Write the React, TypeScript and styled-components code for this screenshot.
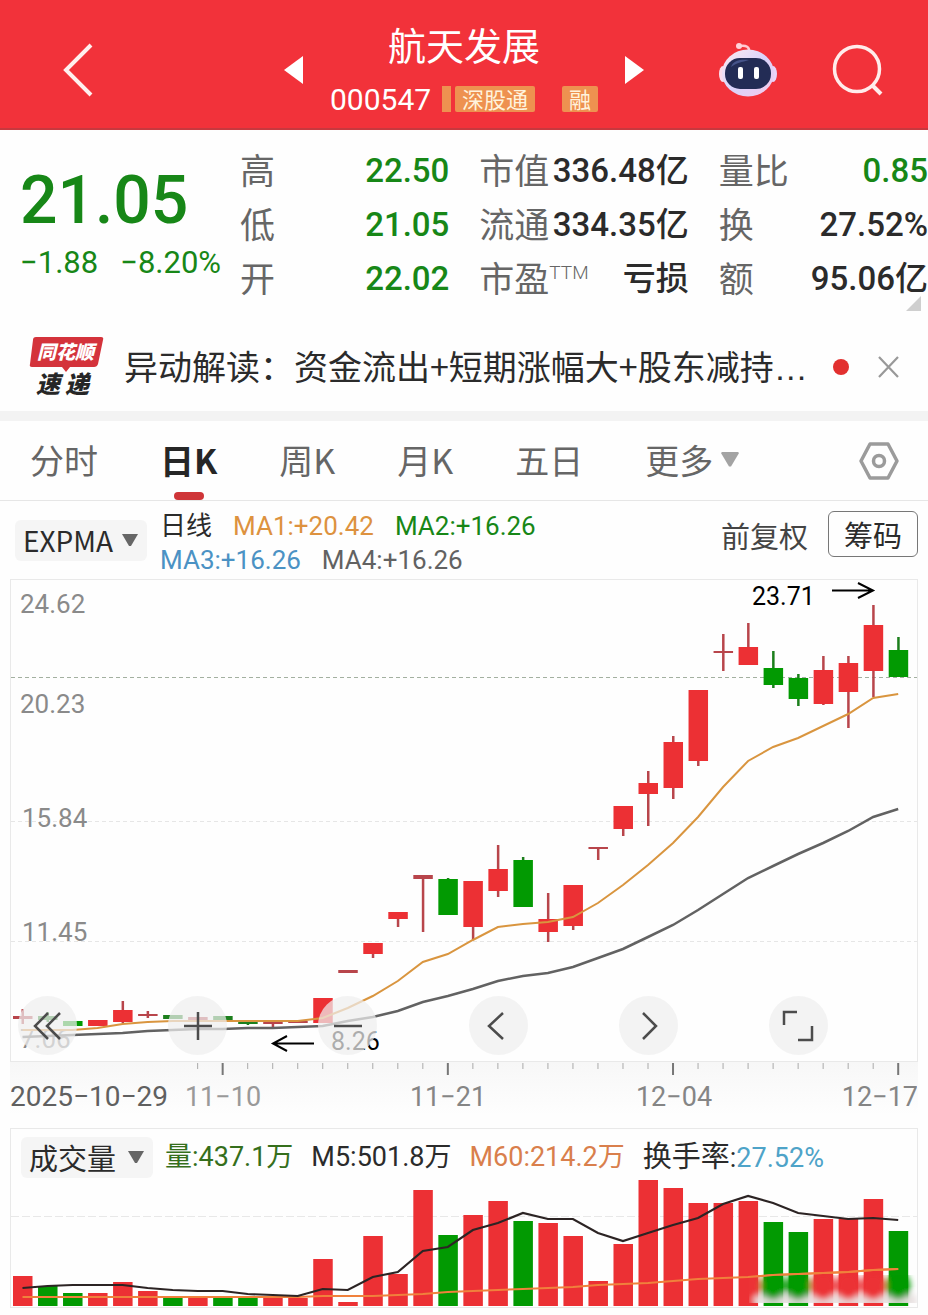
import React from 'react';
import styled, { createGlobalStyle } from 'styled-components';

const RED = '#ec3034';
const GREEN = '#029a02';
const TEXT_GREEN = '#178717';
const NUM = `Roboto, "Noto Sans CJK SC", sans-serif`;
const CJK = `"Noto Sans CJK SC", Roboto, sans-serif`;

const GlobalStyle = createGlobalStyle`
  * { box-sizing: border-box; }
  body { margin: 0; background: #fefefe; font-family: ${NUM}; color: #2b2b2b; }
  button, select { font: inherit; color: inherit; border: 0; background: none; padding: 0; margin: 0; cursor: pointer; }
  h1, p, dl, dd, dt { margin: 0; font-weight: 400; }
  svg { display: block; }
`;

/* ---------- header ---------- */

const Header = styled.header`
  display: grid;
  grid-template-columns: 1fr auto 1fr;
  align-items: center;
  height: 130px;
  padding: 12px 44px 0;
  background: #f2323a;
  border-bottom: 2px solid #c8383e;
`;
const HeaderCenter = styled.div`
  display: flex;
  align-items: center;
  gap: 27px;
`;
const HeaderActions = styled.div`
  display: flex;
  align-items: center;
  justify-content: flex-end;
  gap: 54px;
`;
const IconButton = styled.button`
  display: flex;
  align-items: center;
  justify-content: center;
`;
const BackButton = styled(IconButton)`
  justify-self: start;
  margin-left: 18px;
`;
const StockTitle = styled.div`
  display: flex;
  flex-direction: column;
  align-items: center;
  gap: 6px;
  width: 268px;
  color: #fff;
`;
const StockName = styled.h1`
  font-family: ${CJK};
  font-size: 38px;
  line-height: 52px;
`;
const StockMeta = styled.div`
  display: flex;
  align-items: center;
  width: 100%;
  height: 46px;
`;
const StockCode = styled.span`
  font-size: 30px;
  margin-right: 11px;
`;
const Tag = styled.span<{ $gap?: number }>`
  display: block;
  height: 26px;
  padding: 0 7px;
  margin-left: ${(p) => p.$gap ?? 4}px;
  border-radius: 2px;
  background: #ee9150;
  color: #fff3dc;
  font-family: ${CJK};
  font-size: 22px;
  line-height: 25px;
  white-space: nowrap;
`;
const TagSliver = styled.i`
  width: 9px;
  height: 26px;
  background: #ee9150;
`;

/* ---------- quote ---------- */

const Quote = styled.section`
  position: relative;
  display: grid;
  grid-template-columns: 210px repeat(3, 1fr);
  gap: 30px;
  padding: 14px 0 12px;
`;
const PriceBlock = styled.div`
  padding: 19px 0 0 20px;
  color: ${TEXT_GREEN};
  white-space: nowrap;
`;
const Price = styled.p`
  font-size: 66px;
  line-height: 76px;
  font-weight: 500;
`;
const Change = styled.p`
  display: flex;
  gap: 22px;
  font-size: 31px;
  line-height: 48px;
`;
const Stats = styled.dl`
  display: flex;
  flex-direction: column;
`;
const Stat = styled.div`
  display: flex;
  justify-content: space-between;
  height: 54px;
  line-height: 54px;
  white-space: nowrap;
`;
const StatLabel = styled.dt`
  font-family: ${CJK};
  font-size: 35px;
  line-height: 50px;
  color: #666;
`;
const Sup = styled.span`
  display: inline-block;
  font-family: Roboto, sans-serif;
  font-size: 19px;
  font-weight: 300;
  line-height: 20px;
  vertical-align: 13px;
`;
const StatValue = styled.dd<{ $green?: boolean }>`
  font-size: 33px;
  font-weight: 500;
  color: ${(p) => (p.$green ? TEXT_GREEN : '#2b2b2b')};
`;
const Corner = styled.svg`
  position: absolute;
  right: 7px;
  bottom: 7px;
`;

/* ---------- news ---------- */

const News = styled.section`
  display: flex;
  align-items: center;
  height: 93px;
  padding: 4px 28px 0;
`;
const NewsText = styled.a`
  flex: 1;
  margin-left: 19px;
  overflow: hidden;
  white-space: nowrap;
  color: #2b2b2b;
  font-family: ${CJK};
  font-size: 34px;
  line-height: 50px;
  text-decoration: none;
`;
const Ellipsis = styled.span`
  font-family: "Liberation Sans", sans-serif;
`;
const Dot = styled.i`
  width: 16px;
  height: 16px;
  margin-right: 28px;
  border-radius: 50%;
  background: #e2302f;
`;
const Divider = styled.div`
  height: 10px;
  background: #f3f3f3;
`;

/* ---------- tabs ---------- */

const Tabs = styled.nav`
  display: flex;
  align-items: center;
  gap: 62px;
  height: 80px;
  padding: 0 29px 0 30px;
  border-bottom: 1px solid #e6e6e6;
`;
const Tab = styled.button<{ $active?: boolean }>`
  position: relative;
  display: flex;
  align-items: center;
  gap: 8px;
  height: 79px;
  padding-bottom: 3px;
  font-family: ${CJK};
  font-size: 34px;
  font-weight: ${(p) => (p.$active ? 700 : 400)};
  color: ${(p) => (p.$active ? '#262626' : '#666')};
  &::after {
    content: '';
    display: ${(p) => (p.$active ? 'block' : 'none')};
    position: absolute;
    left: 50%;
    bottom: 0;
    width: 30px;
    height: 8px;
    margin-left: -15px;
    border-radius: 4px;
    background: #cf3538;
  }
`;
const Settings = styled(IconButton)`
  margin-left: auto;
`;

/* ---------- indicator bar ---------- */

const Indicator = styled.section`
  display: flex;
  align-items: center;
  height: 78px;
  padding: 0 10px 0 15px;
`;
const SelectBox = styled.label`
  position: relative;
  display: block;
  border-radius: 6px;
  background: #f5f5f5;
`;
const Select = styled.select<{ $size: number }>`
  display: block;
  appearance: none;
  width: 132px;
  height: 41px;
  padding: 0 0 0 8px;
  font-family: ${CJK};
  font-size: ${(p) => p.$size}px;
  line-height: 41px;
  color: #2b2b2b;
`;
const SelectArrow = styled.svg`
  position: absolute;
  right: 9px;
  top: 14px;
  pointer-events: none;
`;
const Averages = styled.div`
  margin-left: 13px;
  margin-bottom: -6px;
`;
const AverageRow = styled.div`
  display: flex;
  gap: 21px;
  font-size: 26px;
  line-height: 34px;
`;
const Tint = styled.span<{ $c: string }>`
  color: ${(p) => p.$c};
`;
const Adjust = styled.button`
  margin: 0 20px 10px auto;
  font-family: ${CJK};
  font-size: 29px;
  line-height: 44px;
  color: #444;
`;
const Chips = styled.button`
  width: 90px;
  height: 46px;
  margin-bottom: 12px;
  border: 1px solid #777;
  border-radius: 6px;
  font-family: ${CJK};
  font-size: 29px;
  line-height: 40px;
`;

/* ---------- charts ---------- */

const ChartArea = styled.main`
  padding: 0 10px 8px;
`;
const Panel = styled.section`
  position: relative;
  border: 1px solid #e9e9e9;
`;
const Plot = styled.svg`
  width: 100%;
  height: auto;
  font-family: ${NUM};
`;
const Controls = styled.div`
  position: absolute;
  left: 7px;
  right: 89px;
  bottom: 6px;
  display: flex;
  justify-content: space-between;
`;
const Round = styled(IconButton)`
  width: 59px;
  height: 59px;
  border-radius: 50%;
  background: rgba(238, 238, 238, 0.72);
`;
const Axis = styled.div`
  padding: 0 1px;
  background: linear-gradient(#f7f7f7, #fefefe 80%);
`;
const VolumeHead = styled.div`
  display: flex;
  align-items: center;
  height: 50px;
  padding: 6px 0 0 10px;
  font-size: 27px;
  line-height: 42px;
  white-space: nowrap;
`;
const Legend = styled.span<{ $c: string }>`
  margin-left: 18px;
  color: ${(p) => p.$c};
  &:first-of-type { margin-left: 12px; }
`;
const LegendLabel = styled.span`
  font-size: 29px;
`;

/* [body top, body bottom, high, low, colour] in plot units */
type Candle = [number, number, number, number, 'r' | 'g'];
const candles: Candle[] = [
  [437, 440, 430, 445, 'r'], [437, 441, 433, 443, 'g'], [442, 447, 442, 447, 'g'], [441, 447, 441, 447, 'r'],
  [431, 443, 422, 444, 'r'], [435, 437, 432, 439, 'r'], [436, 440, 436, 440, 'g'], [438, 441, 438, 441, 'r'],
  [437, 441, 437, 441, 'g'], [443, 445, 443, 446, 'g'], [442, 445, 442, 448, 'r'], [442, 444, 442, 444, 'r'],
  [419, 444, 419, 444, 'r'], [391, 394, 391, 394, 'r'], [364, 375, 364, 379, 'r'], [333, 340, 333, 348, 'r'],
  [296, 300, 296, 353, 'r'], [300, 336, 299, 336, 'g'], [302, 348, 302, 361, 'r'], [290, 312, 266, 318, 'r'],
  [281, 328, 278, 328, 'g'], [340, 353, 314, 363, 'r'], [306, 347, 306, 351, 'r'], [268, 270, 268, 281, 'r'],
  [227, 250, 227, 257, 'r'], [204, 215, 192, 247, 'r'], [163, 209, 157, 220, 'r'], [111, 182, 111, 187, 'r'],
  [72, 74, 55, 92, 'r'], [68, 86, 44, 86, 'r'], [89, 106, 72, 109, 'g'], [99, 120, 95, 127, 'g'],
  [91, 125, 77, 126, 'r'], [84, 113, 77, 149, 'r'], [46, 92, 26, 118, 'r'], [71, 98, 58, 98, 'g'],
];
const fast = [451, 451, 451, 449, 445, 443, 442, 442, 442, 442, 442, 442, 439, 429, 417, 402, 383, 375, 361, 348,
  345, 343, 338, 324, 306, 286, 264, 238, 208, 182, 168, 159, 147, 135, 119, 115];
const slow = [458, 457, 456, 455, 454, 452, 451, 450, 450, 449, 449, 448, 447, 442, 438, 432, 423, 417, 410, 402,
  397, 394, 388, 379, 370, 358, 346, 331, 315, 299, 287, 275, 264, 252, 238, 230];

/* bar heights in plot units, measured up from the base line */
const volumes = [30, 20, 13, 13, 24, 15, 9, 10, 9, 9, 9, 8, 47, 4, 70, 32, 116, 71, 91, 105,
  85, 83, 70, 25, 62, 126, 118, 103, 103, 105, 84, 74, 87, 87, 107, 75];
const volGreen = [1, 2, 6, 8, 9, 17, 20, 30, 31, 35];
const m5 = [18, 20, 21, 21, 21, 18, 16, 15, 15, 12, 11, 10, 17, 16, 29, 34, 55, 59, 76, 83,
  93, 87, 87, 73, 65, 73, 81, 88, 102, 110, 103, 93, 90, 87, 88, 86];
const m60 = [9, 9, 9, 9, 9, 9, 9, 9, 9, 9, 9, 9, 10, 10, 10, 11, 12, 14, 15, 16,
  17, 18, 19, 21, 22, 23, 25, 27, 28, 29, 31, 32, 33, 34, 36, 37];

const cx = (i: number) => 11.5 + 25.02 * i;
const BASE = 127;
const line = (ys: number[], flip = false) =>
  ys.map((y, i) => `${cx(i)},${flip ? BASE - y : y}`).join(' ');

const wickColor = { r: '#b8454b', g: '#1c7f1c' };

const PriceChart = () => (
  <Plot viewBox="0 1 906 481" role="img" aria-label="日K">
    <g stroke="#e6e6e6" strokeDasharray="4 3">
      <path d="M0 242.5H906M0 362.5H906" />
      <path d="M0 98.5H906" stroke="#a3b0a0" />
    </g>
    <g fill="#8a8a8a" fontSize="26">
      <text x="9" y="34">24.62</text>
      <text x="9" y="134">20.23</text>
      <text x="11" y="248">15.84</text>
      <text x="11" y="362">11.45</text>
      <text x="9" y="469">7.06</text>
    </g>
    {candles.map(([t, b, h, l, c], i) => (
      <g key={i}>
        <rect x={cx(i) - 1} y={h} width={2.5} height={l - h} fill={wickColor[c]} />
        <rect x={cx(i) - 9.5} y={t} width={19.5} height={b - t} fill={b - t < 5 ? wickColor[c] : c === 'r' ? RED : GREEN} />
      </g>
    ))}
    <polyline points={line(slow)} fill="none" stroke="#626262" strokeWidth="2.5" />
    <polyline points={line(fast)} fill="none" stroke="#d9953f" strokeWidth="2" />
    <g fill="#000" fontSize="25">
      <text x="741" y="26">23.71</text>
      <text x="320" y="471">8.26</text>
    </g>
    <g stroke="#000" strokeWidth="2" fill="none">
      <path d="M821 11.5H862M847 4L862 11.5L847 19" />
      <path d="M303 464.500H262M276 457L262 464.500L276 472" />
    </g>
  </Plot>
);

const major = [8, 17, 26, 35];
const AxisChart = () => (
  <Plot viewBox="0 0 906 66">
    {Array.from({ length: 29 }, (_, k) => k + 7).map((i) => (
      <rect key={i} x={cx(i) - (major.includes(i) ? 1 : 0.5)} y="1" width={major.includes(i) ? 2 : 1}
        height={major.includes(i) ? 12 : 6} fill={major.includes(i) ? '#777' : '#aaa'} />
    ))}
    <g fontSize="27" fill="#858585">
      <text x="-1" y="44" fontSize="28" fill="#606060">2025−10−29</text>
      <text x="212" y="44" textAnchor="middle" fill="#999">11−10</text>
      <text x="437" y="44" textAnchor="middle">11−21</text>
      <text x="663" y="44" textAnchor="middle">12−04</text>
      <text x="907" y="44" textAnchor="end">12−17</text>
    </g>
  </Plot>
);

const VolumeChart = () => (
  <Plot viewBox="0 0 906 128" role="img" aria-label="成交量">
    <defs>
      <filter id="smear" x="-20%" y="-40%" width="140%" height="180%">
        <feGaussianBlur stdDeviation="3" />
      </filter>
      <clipPath id="smearArea"><rect x="738" y="96" width="168" height="28" /></clipPath>
    </defs>
    <path d="M0 37.5H906" stroke="#e8e8e8" strokeDasharray="8 3" />
    {volumes.map((v, i) => (
      <rect key={i} x={cx(i) - 9.5} y={BASE - v} width={19.5} height={v} fill={volGreen.includes(i) ? GREEN : RED} />
    ))}
    <polyline points={line(m60, true)} fill="none" stroke="#f0813c" strokeWidth="2" />
    <polyline points={line(m5, true)} fill="none" stroke="#2c2424" strokeWidth="2.2" />
    <g clipPath="url(#smearArea)">
      <g filter="url(#smear)">
        <rect x="742" y="116" width="164" height="12" fill="#e9e2e2" />
        {[29, 30, 31, 32, 33, 34, 35].map((i) => (
          <ellipse key={i} cx={cx(i)} cy="107" rx="12" ry="14" fill={volGreen.includes(i) ? GREEN : RED} />
        ))}
      </g>
    </g>
    <polyline points={line(m60, true).split(' ').slice(29).join(' ')} fill="none" stroke="#f0813c" strokeWidth="2" />
  </Plot>
);

const Triangle = ({ flip }: { flip?: boolean }) => (
  <svg width="19" height="28" viewBox="0 0 19 28">
    <path d={flip ? 'M0 0L19 14L0 28Z' : 'M19 0L0 14L19 28Z'} fill="#fff" />
  </svg>
);

const Robot = () => (
  <svg width="60" height="56" viewBox="0 0 60 56">
    <defs>
      <linearGradient id="shell" x1="0" y1="0" x2="1" y2="1">
        <stop offset="0" stopColor="#ffe9ef" />
        <stop offset="0.5" stopColor="#d9d4fb" />
        <stop offset="1" stopColor="#f6c9ea" />
      </linearGradient>
    </defs>
    <path d="M31 10C32 5 28 3 22 4" fill="none" stroke="#ffc9d2" strokeWidth="2.5" />
    <circle cx="21" cy="4" r="3" fill="#ffd3da" />
    <ellipse cx="5" cy="32" rx="4" ry="8" fill="#fbdcea" />
    <ellipse cx="55" cy="32" rx="4" ry="8" fill="#e9d4f8" />
    <ellipse cx="30" cy="31" rx="26" ry="23.5" fill="url(#shell)" />
    <rect x="7" y="16" width="46" height="31" rx="15" fill="#232c55" />
    <path d="M13 25C15 18 24 17 31 18C24 20 18 21 13 25Z" fill="#46548a" />
    <rect x="20" y="25" width="5" height="12" rx="2" fill="#fff" />
    <rect x="36" y="25" width="5" height="12" rx="2" fill="#fff" />
  </svg>
);

const Down = ({ c, w = 16 }: { c: string; w?: number }) => (
  <svg width={w} height="15" viewBox="0 0 18 15"><path d="M1 0H17L18 1L10 14.5H8L0 1Z" fill={c} /></svg>
);

const ControlIcon = ({ d }: { d: string }) => (
  <svg width="40" height="40" viewBox="0 0 40 40" fill="none" stroke="#4c4c4c" strokeWidth="2.5"><path d={d} /></svg>
);

const controls = [
  { label: '最早', d: 'M20 7L7 20L20 33M32 7L19 20L32 33' },
  { label: '放大', d: 'M20 6V34M6 20H34' },
  { label: '缩小', d: 'M6 20H34' },
  { label: '向前', d: 'M25 7L11 20L25 33' },
  { label: '向后', d: 'M15 7L28 20L15 33' },
  { label: '全屏', d: 'M6 19V6H19M34 20V34H20' },
];

const columns = [
  [['高', '22.50', true], ['低', '21.05', true], ['开', '22.02', true]],
  [['市值', '336.48亿', false], ['流通', '334.35亿', false], ['市盈', '亏损', false]],
  [['量比', '0.85', true], ['换', '27.52%', false], ['额', '95.06亿', false]],
] as [string, string, boolean][][];

export default function App() {
  return (
    <div lang="zh-CN">
      <GlobalStyle />
      <Header>
        <BackButton aria-label="返回">
          <svg width="32" height="54" viewBox="0 0 32 54" fill="none" stroke="#fff0ee" strokeWidth="4">
            <path d="M29 2L4 27L29 52" />
          </svg>
        </BackButton>
        <HeaderCenter>
          <IconButton aria-label="上一只"><Triangle /></IconButton>
          <StockTitle>
            <StockName>航天发展</StockName>
            <StockMeta>
              <StockCode>000547</StockCode>
              <TagSliver />
              <Tag>深股通</Tag>
              <Tag $gap={27}>融</Tag>
            </StockMeta>
          </StockTitle>
          <IconButton aria-label="下一只"><Triangle flip /></IconButton>
        </HeaderCenter>
        <HeaderActions>
          <IconButton aria-label="助手"><Robot /></IconButton>
          <IconButton aria-label="搜索">
            <svg width="52" height="52" viewBox="0 0 52 52" fill="none" stroke="#ffeceb" strokeWidth="3.5">
              <circle cx="25" cy="25" r="22.5" />
              <path d="M40 41L49 50" strokeWidth="4" />
            </svg>
          </IconButton>
        </HeaderActions>
      </Header>

      <Quote>
        <PriceBlock>
          <Price>21.05</Price>
          <Change><span>−1.88</span><span>−8.20%</span></Change>
        </PriceBlock>
        {columns.map((rows, i) => (
          <Stats key={i}>
            {rows.map(([label, value, green]) => (
              <Stat key={label}>
                <StatLabel>{label}{label === '市盈' && <Sup>TTM</Sup>}</StatLabel>
                <StatValue $green={green}>{value}</StatValue>
              </Stat>
            ))}
          </Stats>
        ))}
        <Corner width="15" height="15" viewBox="0 0 15 15"><path d="M15 0V15H0Z" fill="#cfcfcf" /></Corner>
      </Quote>

      <News>
        <svg width="77" height="70" viewBox="0 -4 77 70" overflow="visible">
          <path d="M8 1H73Q76 1 75 4L70 28Q69 31 66 31H42L38 36L34 31H4Q1 31 2 28L5 4Q5 1 8 1Z" fill="#d4333b" />
          <g fontFamily="Noto Sans CJK SC, sans-serif" fontWeight="900" fontStyle="italic">
            <text x="9" y="23" fontSize="19" fill="#fff">同花顺</text>
            <text x="8" y="57" fontSize="24" fill="#262626">速</text>
            <text x="37" y="57" fontSize="24" fill="#262626">递</text>
          </g>
        </svg>
        <NewsText href="#news">异动解读：资金流出+短期涨幅大+股东减持<Ellipsis>…</Ellipsis></NewsText>
        <Dot />
        <IconButton aria-label="关闭">
          <svg width="23" height="22" viewBox="0 0 23 22" stroke="#999" strokeWidth="2.2"><path d="M2 1L21 21M21 1L2 21" /></svg>
        </IconButton>
      </News>
      <Divider />

      <Tabs>
        <Tab>分时</Tab>
        <Tab $active>日K</Tab>
        <Tab>周K</Tab>
        <Tab>月K</Tab>
        <Tab>五日</Tab>
        <Tab>更多<Down c="#a3a3a3" w={18} /></Tab>
        <Settings aria-label="设置">
          <svg width="40" height="38" viewBox="0 0 40 38" fill="none" stroke="#9b9b9b" strokeWidth="3.5" strokeLinejoin="round">
            <path d="M11 2H29L38 19L29 36H11L2 19Z" />
            <circle cx="20" cy="19" r="5.5" />
          </svg>
        </Settings>
      </Tabs>

      <Indicator>
        <SelectBox>
          <Select $size={28} aria-label="指标"><option>EXPMA</option></Select>
          <SelectArrow width="16" height="12" viewBox="0 0 16 12"><path d="M0 0H16L9 12H7Z" fill="#666" /></SelectArrow>
        </SelectBox>
        <Averages>
          <AverageRow>
            <span>日线</span>
            <Tint $c="#dd923f">MA1:+20.42</Tint>
            <Tint $c={TEXT_GREEN}>MA2:+16.26</Tint>
          </AverageRow>
          <AverageRow>
            <Tint $c="#4b92c4">MA3:+16.26</Tint>
            <Tint $c="#626262">MA4:+16.26</Tint>
          </AverageRow>
        </Averages>
        <Adjust>前复权</Adjust>
        <Chips>筹码</Chips>
      </Indicator>

      <ChartArea>
        <Panel>
          <PriceChart />
          <Controls>
            {controls.map((c) => (
              <Round key={c.label} aria-label={c.label}><ControlIcon d={c.d} /></Round>
            ))}
          </Controls>
        </Panel>
        <Axis><AxisChart /></Axis>
        <Panel>
          <VolumeHead>
            <SelectBox>
              <Select $size={29} aria-label="副图"><option>成交量</option></Select>
              <SelectArrow width="16" height="12" viewBox="0 0 16 12"><path d="M0 0H16L9 12H7Z" fill="#666" /></SelectArrow>
            </SelectBox>
            <Legend $c="#356f1c">量:437.1万</Legend>
            <Legend $c="#2b2b2b">M5:501.8万</Legend>
            <Legend $c="#d97f4c">M60:214.2万</Legend>
            <Legend $c="#2b2b2b"><LegendLabel>换手率</LegendLabel>:<Tint $c="#4ea3c8">27.52%</Tint></Legend>
          </VolumeHead>
          <VolumeChart />
        </Panel>
      </ChartArea>
    </div>
  );
}
